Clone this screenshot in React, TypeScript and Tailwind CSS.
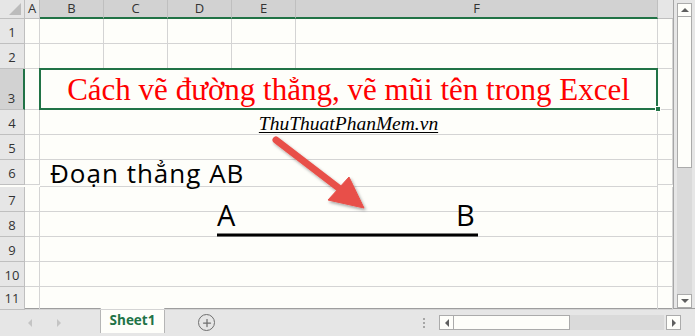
import { Plus } from "lucide-react";

const sans = { fontFamily: '"Open Sans", "Noto Sans", sans-serif' };
const serif = { fontFamily: '"Liberation Serif", "DejaVu Serif", serif' };

const headers = ["B", "C", "D", "E", "F"];
const rowHeights = ["h-[25px]", "h-[25px]", "h-[41px]", "h-[25px]", "h-[25px]", "h-[25px]", "h-[25px]", "h-[25px]", "h-[25px]", "h-[25px]", "h-[23px]"];

function RowHeader({ n, selected }: { n: number; selected?: boolean }) {
  return (
    <div
      className={`flex items-end justify-center border-b border-r border-[#bfbfbf] pb-[4px] text-[13px] leading-none text-[#333] ${
        selected ? "border-r-2 border-r-[#217346] bg-[#d2d2d2]" : "bg-[#e6e6e6]"
      }`}
      style={sans}
    >
      {n}
    </div>
  );
}

function Cell({ span, children, className = "" }: { span?: boolean; children?: React.ReactNode; className?: string }) {
  return (
    <div className={`border-b border-r border-[#d4d4d4] ${span ? "col-span-5" : ""} ${className}`}>
      {children}
    </div>
  );
}

function Sheet() {
  return (
    <div className="relative w-[674px] border-r border-[#a6a6a6] bg-[#fefefa]">
      <div className="grid grid-cols-[25px_15px_64px_64px_64px_64px_362px_15px]">
        {/* header row */}
        <div className="relative h-[19px] border-b border-r border-[#bfbfbf] bg-[#e6e6e6]">
          <div className="absolute bottom-[3px] right-[3px] h-0 w-0" style={{ borderBottom: "12px solid #bcbcbc", borderLeft: "12px solid transparent" }} />
        </div>
        <div className="flex h-[19px] items-center justify-center border-b border-r border-[#bfbfbf] bg-[#e6e6e6] text-[13px] text-[#333]" style={sans}>
          A
        </div>
        {headers.map((h) => (
          <div
            key={h}
            className="flex h-[19px] items-center justify-center border-b-2 border-r border-b-[#217346] border-r-[#bfbfbf] bg-[#d2d2d2] pt-[1px] text-[13px] text-[#333]"
            style={sans}
          >
            {h}
          </div>
        ))}
        <div className="h-[19px] border-b border-[#bfbfbf] bg-[#e6e6e6]" />

        {rowHeights.map((h, i) => {
          const r = i + 1;
          return (
            <div key={r} className="contents">
              <div className={`${h} grid`}>
                <RowHeader n={r} selected={r === 3} />
              </div>
              <Cell className={h} />
              {r <= 2 ? (
                <>
                  <Cell />
                  <Cell />
                  <Cell />
                  <Cell />
                  <Cell />
                </>
              ) : r === 3 ? (
                <Cell span className="relative">
                  <div className="absolute -left-px -top-px bottom-[-1px] right-[-1px] flex items-center justify-center border-2 border-[#217346] pt-[1px] text-[31px] leading-none text-[#ff0000]" style={serif}>
                    Cách vẽ đường thẳng, vẽ mũi tên trong Excel
                  </div>
                  <div className="absolute bottom-[-3px] right-[-4px] h-[6px] w-[6px] border border-[#fefefa] bg-[#217346]" />
                </Cell>
              ) : r === 4 ? (
                <Cell span className="flex items-end justify-center">
                  <span className="pb-[1px] text-[19.5px] italic leading-none text-black underline underline-offset-2" style={serif}>
                    ThuThuatPhanMem.vn
                  </span>
                </Cell>
              ) : r === 6 ? (
                <Cell span className="flex items-end pl-[10px]">
                  <span className="whitespace-nowrap text-[26px] leading-none tracking-[1px] text-black" style={sans}>
                    Đoạn thẳng AB
                  </span>
                </Cell>
              ) : (
                <Cell span />
              )}
              <Cell className={h} />
            </div>
          );
        })}
      </div>

      {/* drawn shapes */}
      <span className="absolute left-[217px] top-[200px] text-[29px] leading-none text-black" style={sans}>
        A
      </span>
      <span className="absolute left-[456px] top-[200px] text-[29px] leading-none text-black" style={sans}>
        B
      </span>
      <svg className="pointer-events-none absolute left-0 top-0" width="674" height="308">
        <defs>
          <filter id="sh" x="-20%" y="-20%" width="140%" height="140%">
            <feDropShadow dx="1.5" dy="2" stdDeviation="1.5" floodColor="#000" floodOpacity="0.35" />
          </filter>
        </defs>
        <line x1="217" y1="235" x2="478" y2="235" stroke="#000" strokeWidth="3" />
        <g filter="url(#sh)" fill="#e8504a" stroke="#e8504a">
          <line x1="276" y1="140" x2="340" y2="189" strokeWidth="7" strokeLinecap="round" />
          <polygon points="328,200 349,177 364,208" strokeWidth="1" strokeLinejoin="round" />
        </g>
      </svg>
    </div>
  );
}

function VScroll() {
  return (
    <div className="ml-[3px] flex w-[15px] flex-col pt-[3px]">
      <div className="flex h-[14px] items-center justify-center border border-[#ababab] bg-[#fefefa]">
        <div className="h-0 w-0 border-x-[4px] border-b-[4px] border-x-transparent border-b-[#5f5f5f]" />
      </div>
      <div className="h-[151px] border-x border-b border-[#ababab] bg-[#fefefa]" />
      <div className="flex-1 bg-[#dadada]" />
      <div className="flex h-[14px] items-center justify-center border border-[#ababab] bg-[#fefefa]">
        <div className="h-0 w-0 border-x-[4px] border-t-[4px] border-x-transparent border-t-[#5f5f5f]" />
      </div>
    </div>
  );
}

function BottomBar() {
  return (
    <div className="flex h-[28px] items-start border-t border-[#9e9e9e] bg-[#e6e6e6]">
      <div className="flex h-[27px] w-[100px] items-center">
        <div className="ml-[28px] h-0 w-0 border-y-[4px] border-r-[4px] border-y-transparent border-r-[#c4c4c4]" />
        <div className="ml-[25px] h-0 w-0 border-y-[4px] border-l-[4px] border-y-transparent border-l-[#c4c4c4]" />
      </div>
      <div className="-mt-px flex h-[25px] w-[65px] items-center justify-center border-x border-[#b5b5b5] bg-[#fefefa] text-[13.5px] font-bold text-[#217346]" style={sans}>
        <span className="-mt-[1px]">Sheet1</span>
      </div>
      <div className="ml-[33px] mt-[5px] flex h-[17px] w-[17px] items-center justify-center rounded-full border-[1.5px] border-[#6f6f6f]">
        <Plus size={12} strokeWidth={2.5} color="#6f6f6f" />
      </div>
      <div className="ml-[208px] mt-[9px] flex flex-col gap-[2px]">
        <div className="h-[2px] w-[2px] bg-[#a6a6a6]" />
        <div className="h-[2px] w-[2px] bg-[#a6a6a6]" />
        <div className="h-[2px] w-[2px] bg-[#a6a6a6]" />
      </div>
      <div className="ml-[14px] mt-[6px] flex h-[15px] w-[242px]">
        <div className="flex w-[15px] items-center justify-center border border-[#ababab] bg-[#fefefa]">
          <div className="h-0 w-0 border-y-[4px] border-r-[4px] border-y-transparent border-r-[#5f5f5f]" />
        </div>
        <div className="w-[116px] border-y border-r border-[#ababab] bg-[#fefefa]" />
        <div className="flex-1 bg-[#dadada]" />
        <div className="ml-[2px] flex w-[15px] items-center justify-center border border-[#ababab] bg-[#fefefa]">
          <div className="h-0 w-0 border-y-[4px] border-l-[4px] border-y-transparent border-l-[#5f5f5f]" />
        </div>
      </div>
    </div>
  );
}

export default function App() {
  return (
    <div className="h-[336px] w-[695px] overflow-hidden bg-[#e6e6e6]">
      <div className="flex h-[308px]">
        <Sheet />
        <VScroll />
      </div>
      <BottomBar />
    </div>
  );
}
